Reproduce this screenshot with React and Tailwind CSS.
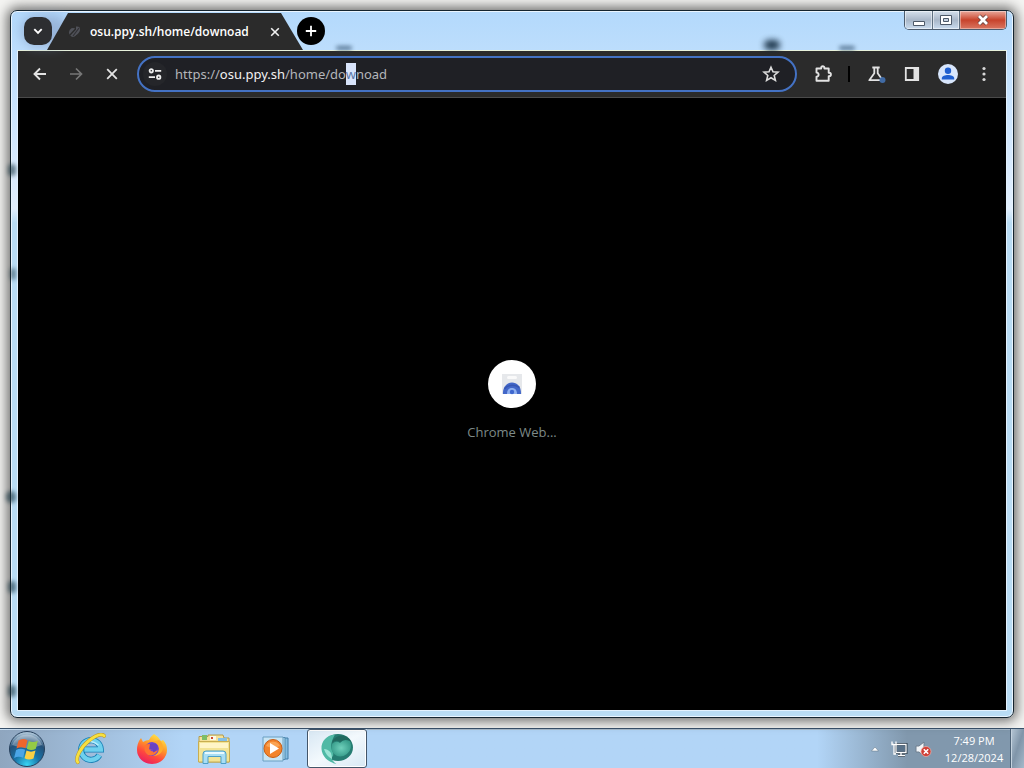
import React from "react";

const iconButton =
  "flex h-8 w-9 shrink-0 items-center justify-center text-[#e3e3e3] hover:text-white";

function Titlebar() {
  return (
    <header className="relative flex h-[39px] shrink-0 items-end pl-1.5">
      <span className="absolute right-[227px] bottom-0 h-2.5 w-4 rounded-full bg-[#10283c] opacity-90 blur-[3px]" />
      <span className="absolute right-[152px] bottom-0 h-1 w-4 rounded-full bg-[#2c4a66] opacity-70 blur-[2px]" />
      <span className="absolute left-[319px] bottom-0 h-1 w-4 rounded-full bg-[#2c4a66] opacity-70 blur-[2px]" />
      <span className="absolute left-1 top-1 h-8 w-12 rounded-full bg-[#7a90b8] opacity-50 blur-[6px]" />
      <button
        aria-label="Search tabs"
        className="relative mb-[5px] ml-px flex size-7 shrink-0 items-center justify-center rounded-[10px] bg-[#2d2e31]"
      >
        <svg viewBox="0 0 16 16" className="size-4" fill="none" stroke="#fff" strokeWidth="1.9">
          <path d="M4.3 6.2 8 9.9l3.7-3.7" />
        </svg>
      </button>
      <div className="relative -ml-[5px] flex h-[37px] w-[256px] shrink-0 items-center bg-[#2b2b2b] pr-5 pl-5 [clip-path:polygon(21px_0,234px_0,100%_100%,0_100%)]">
        <svg viewBox="0 0 16 16" className="size-4 shrink-0" fill="none">
          <ellipse cx="6" cy="8.500" rx="4" ry="4.400" fill="#505259" />
          <path d="M2 12 10.500 3" stroke="#2b2b2b" strokeWidth="1.4" />
          <path d="M9 2.500c3-.5 4.500 1 4 3.500s-2 4-4 5z" fill="#505259" />
          <path d="m6 12 6-8" stroke="#303135" strokeWidth="1.2" />
        </svg>
        <span className="ml-[7px] flex-1 truncate font-['Open_Sans','Noto_Sans',sans-serif] text-[12px] leading-4 font-semibold text-white">
          osu.ppy.sh/home/downoad
        </span>
        <button aria-label="Close tab" className="flex size-4 items-center justify-center">
          <svg viewBox="0 0 16 16" className="size-4" stroke="#f1f1f1" strokeWidth="1.6">
            <path d="m4.2 4.2 7.6 7.6M11.8 4.2l-7.6 7.6" />
          </svg>
        </button>
      </div>
      <button
        aria-label="New tab"
        className="relative mb-[5px] -ml-1.5 flex size-7 shrink-0 items-center justify-center rounded-full bg-black"
      >
        <svg viewBox="0 0 16 16" className="size-4" stroke="#fff" strokeWidth="1.8">
          <path d="M8 2.8v10.4M2.8 8h10.4" />
        </svg>
      </button>
      <div className="ml-auto flex h-[19px] self-start overflow-hidden rounded-b-[5px] border border-t-0 border-[#4b5b6d]">
        <button aria-label="Minimize" className="flex w-7 items-end justify-center border-r border-[#5f7080] bg-linear-to-b from-[#d5e0ec] via-[#a9b7c8] via-50% to-[#c9dbee] pb-0.5 shadow-[inset_0_0_0_1px_#ffffff80]">
          <svg viewBox="0 0 14 12" className="h-3 w-3.5"><path d="M1.5 6.5h11v4h-11z" fill="#fff" stroke="#4d5968" /></svg>
        </button>
        <button aria-label="Restore" className="flex w-[27px] items-center justify-center border-r border-[#5f7080] bg-linear-to-b from-[#d5e0ec] via-[#a9b7c8] via-50% to-[#c9dbee] shadow-[inset_0_0_0_1px_#ffffff80]">
          <svg viewBox="0 0 12 12" className="size-3"><path d="M.5 1.5h11v9H.5z" fill="#fff" stroke="#4d5968" /><path d="M3.5 4.5h5v3h-5z" fill="#c6d2e0" stroke="#4d5968" /></svg>
        </button>
        <button aria-label="Close" className="flex w-[46px] items-center justify-center bg-linear-to-b from-[#e7a79b] via-[#c7422b] via-50% to-[#d97560] shadow-[inset_0_0_0_1px_#ffffff60]">
          <svg viewBox="0 0 14 12" className="h-3 w-3.5" fill="none">
            <path d="m3 2 8 8M11 2l-8 8" stroke="#64413f" strokeWidth="4.4" />
            <path d="m3 2 8 8M11 2l-8 8" stroke="#fff" strokeWidth="2.800" />
          </svg>
        </button>
      </div>
    </header>
  );
}

function Toolbar() {
  return (
    <nav className="flex h-[47px] shrink-0 items-center border-b border-[#4a4a4a] bg-[#2b2b2b] pr-1 pl-1">
      <button aria-label="Back" className={iconButton}>
        <svg viewBox="0 0 20 20" className="size-5" fill="none" stroke="currentColor" strokeWidth="1.9"><path d="M16 10H5M10 4.5 4.5 10l5.5 5.5" /></svg>
      </button>
      <button aria-label="Forward" className={iconButton}>
        <svg viewBox="0 0 20 20" className="size-5" fill="none" stroke="#777" strokeWidth="1.7"><path d="M4 10h11M10 4.5l5.5 5.5-5.5 5.5" /></svg>
      </button>
      <button aria-label="Stop" className={iconButton}>
        <svg viewBox="0 0 20 20" className="size-5" fill="none" stroke="currentColor" strokeWidth="1.8"><path d="m5.2 5.2 9.6 9.6M14.8 5.2l-9.6 9.6" /></svg>
      </button>
      <div className="ml-[7px] flex h-9 min-w-0 flex-1 items-center rounded-full border-2 border-[#4472c4] bg-[#1f2025] pr-2.5 pl-1">
        <button aria-label="Site information" className="flex size-6 shrink-0 items-center justify-center rounded-full bg-[#25262a]">
          <svg viewBox="0 0 16 16" className="size-4" fill="none" stroke="#eee" strokeWidth="1.8">
            <circle cx="4.3" cy="4.8" r="1.7" /><path d="M8 4.8h6.2M1.8 11.2H8" /><circle cx="11.7" cy="11.2" r="1.7" />
          </svg>
        </button>
        <div className="relative ml-2 min-w-0 flex-1 text-[13px] leading-[22px]">
          <input
            aria-label="Address and search bar"
            defaultValue="https://osu.ppy.sh/home/downoad"
            spellCheck={false}
            className="block w-full bg-transparent text-transparent outline-none"
          />
          <span aria-hidden="true" className="pointer-events-none absolute inset-0 truncate text-[#b4b6ba]">
            https://<span className="text-[#f2f2f2]">osu.ppy.sh</span>/home/do<span className="bg-[#d8e4fb] py-0.5 text-[#5c78a8]">w</span>noad
          </span>
        </div>
        <button aria-label="Bookmark this tab" className="flex size-7 shrink-0 items-center justify-center">
          <svg viewBox="0 0 20 20" className="size-5" fill="none" stroke="#ddd" strokeWidth="1.6"><path d="m10 3.2 2 4.6 5 .4-3.8 3.3 1.2 4.9-4.4-2.6-4.4 2.6 1.2-4.9L3 8.200l5-.4z" /></svg>
        </button>
      </div>
      <button aria-label="Extensions" className={iconButton + " ml-2"}>
        <svg viewBox="0 0 20 20" className="size-5" fill="none" stroke="currentColor" strokeWidth="1.9" strokeLinejoin="round">
          <path d="M3.500 4.500h4.700V3.800a1.600 1.600 0 0 1 3.200 0v.7h4.300v4.200h.5a1.700 1.700 0 0 1 0 3.400h-.5v4.700H3.500v-4a2.100 2.100 0 0 0 0-4.200z" />
        </svg>
      </button>
      <span className="mr-2 ml-[7px] h-4 w-0.5 bg-black" />
      <button aria-label="Experiments" className={iconButton}>
        <svg viewBox="0 0 20 20" className="size-5" fill="none">
          <path d="M6.300 3.500h7.400M8.300 3.500v5.700l-5 7h13.400l-5-7V3.500" stroke="#e3e3e3" strokeWidth="1.8" strokeLinejoin="round" />
          <circle cx="16.500" cy="16" r="3" fill="#416ba5" />
        </svg>
      </button>
      <button aria-label="Side panel" className={iconButton}>
        <svg viewBox="0 0 20 20" className="size-5"><path d="M3.800 4h12.400v12H3.800z" fill="none" stroke="#e3e3e3" strokeWidth="1.800" /><path d="M11.500 4h5v12h-5z" fill="#e3e3e3" /></svg>
      </button>
      <button aria-label="Profile" className={iconButton}>
        <svg viewBox="0 0 20 20" className="size-5">
          <circle cx="10" cy="10" r="10" fill="#d8e6fc" />
          <circle cx="10" cy="6.800" r="3.200" fill="#1f5fd0" />
          <path d="M3.800 15.500v-1.400c0-2.100 3.500-3.200 6.200-3.200s6.200 1.100 6.200 3.200v1.400z" fill="#1f5fd0" />
        </svg>
      </button>
      <button aria-label="Menu" className={iconButton}>
        <svg viewBox="0 0 20 20" className="size-5" fill="#d8d8d8"><circle cx="10" cy="4.500" r="1.600" /><circle cx="10" cy="10" r="1.600" /><circle cx="10" cy="15.500" r="1.600" /></svg>
      </button>
    </nav>
  );
}

function Page() {
  return (
    <main className="flex flex-1 flex-col items-center justify-center bg-black pb-2">
      <a href="#webstore" className="flex flex-col items-center gap-4 font-['Open_Sans','Noto_Sans',sans-serif] text-[13px] leading-4 text-[#7d8a88]">
        <span className="flex size-12 items-center justify-center rounded-full bg-white">
          <svg viewBox="0 0 24 24" className="size-6">
            <path d="M2 2h20v20H2z" fill="#e6e8eb" />
            <rect x="7" y="4" width="10" height="3" rx="1.500" fill="#fafafa" />
            <path d="M3 22c-.5-7 4-11.500 9-11.500S21.500 15 21 22z" fill="#4267c8" />
            <path d="M7 22c0-4 2-6 5-6s5 2 5 6z" fill="#8fb0f0" />
            <circle cx="12" cy="20" r="2.200" fill="#3f68cf" />
            <path d="M4.500 17c3-4 9-5 15-1.500" stroke="#3656b3" strokeWidth="1.500" fill="none" />
          </svg>
        </span>
        <span>Chrome Web...</span>
      </a>
    </main>
  );
}

function StartOrb() {
  return (
    <svg viewBox="0 0 38 38" className="size-[38px]">
      <defs>
        <radialGradient id="orb" cx=".5" cy=".95" r=".9">
          <stop offset="0" stopColor="#37d5f4" /><stop offset=".4" stopColor="#1974a8" /><stop offset=".75" stopColor="#245078" /><stop offset="1" stopColor="#a9c2d6" />
        </radialGradient>
      </defs>
      <circle cx="19" cy="19" r="17.500" fill="url(#orb)" stroke="#27405c" />
      <path d="M4 15A16 16 0 0 1 34 15Q19 21 4 15" fill="#fff" opacity=".3" />
      <path d="M10.500 10.500q4.500-3 9-.2l-2 8q-4.500-2.300-9 .3z" fill="#f0662c" />
      <path d="M20.800 11q4.500 2.300 9-.3l-2 8q-4.500 2.500-9 0z" fill="#94ca45" />
      <path d="M8.100 20q4.500-2.500 9-.2l-2 8q-4.500-2.300-9 .2z" fill="#4ba5e6" />
      <path d="M18.500 20.500q4.500 2.300 9 0l-2 8q-4.500 2.300-9-.2z" fill="#fbd044" />
    </svg>
  );
}

function IeIcon() {
  return (
    <svg viewBox="0 0 34 34" className="size-8" fill="none">
      <path d="M27 23.500A10.500 10.500 0 1 1 28.500 17.500H11" stroke="#167fb5" strokeWidth="6.500" />
      <path d="M27 23.500A10.500 10.500 0 1 1 28.500 17.500H11" stroke="#6ed0ee" strokeWidth="4.800" />
      <path d="M9 13q8-8 17 0" stroke="#b4edfc" strokeWidth="1.500" />
      <path d="M4 31C1 27 7 15 16 8S30 1 32 3" stroke="#b9952b" strokeWidth="4" strokeLinecap="round" />
      <path d="M4 31C1 27 7 15 16 8S30 1 32 3" stroke="#f7e040" strokeWidth="3" strokeLinecap="round" />
    </svg>
  );
}

function FirefoxIcon() {
  return (
    <svg viewBox="0 0 34 34" className="size-[34px]">
      <defs>
        <linearGradient id="fox" x1=".8" y1="0" x2=".3" y2="1">
          <stop offset="0" stopColor="#fff14f" /><stop offset=".4" stopColor="#ff9b28" /><stop offset=".7" stopColor="#ff493d" /><stop offset="1" stopColor="#e91d62" />
        </linearGradient>
      </defs>
      <path d="M19 2q5 3 7 7l2-1q4 4 4 10a15 14 0 0 1-30 0q0-7 4-12l2 4q3-2 6-2 2-4 5-6" fill="url(#fox)" />
      <circle cx="17" cy="17" r="7" fill="#7147d5" />
      <path d="M10 13q7-3 10 3-3-1-5 2 3 3 8 0-3 7-10 5-5-3-3-10" fill="#ff7430" />
      <path d="M16 10q7-1 8 6 0 6-6 8 8 0 10-7 0-7-4-9-3 1-8 2" fill="#ffab2b" />
      <path d="M15 12q6-2 7.500 2.500 0 4-4.500 6 1-5-4-3z" fill="#6a42c0" />
    </svg>
  );
}

function ExplorerIcon() {
  return (
    <svg viewBox="0 0 36 32" className="h-8 w-9">
      <path d="M3 8V3.500h9V2h15l1 3h5v24H3z" fill="#f4e199" stroke="#b29b4c" />
      <path d="M6 2h5v5H6z" fill="#7dbd68" /><path d="M14 3h6v4h-6z" fill="#faf8e9" /><path d="M15 4h2v2h-2z" fill="#d04a31" /><path d="M22 5h9v3h-9z" fill="#84bfe6" />
      <path d="M2.500 8.500h31V29h-31z" fill="#f3e495" stroke="#c8ad50" />
      <path d="M4 10h28v5H4z" fill="#fff5c7" />
      <path d="M7 30.500V21q0-3 3-3h17q3 0 3 3v9.500h-5v-7H12v7z" fill="#a9def4" stroke="#4c9fc8" />
      <path d="M9 20h19" stroke="#e9faff" strokeWidth="2" />
    </svg>
  );
}

function MediaIcon() {
  return (
    <svg viewBox="0 0 30 28" className="h-7 w-[30px]">
      <path d="M8 3h19v21H8z" fill="#84bce1" stroke="#427ea8" /><path d="M5 2.500h19v22H5z" fill="#b1dbf2" stroke="#508bb1" /><path d="M2 2h20v24H2z" fill="#c7e5f5" stroke="#6b9fc1" />
      <circle cx="12" cy="13.500" r="9" fill="#f3842c" stroke="#c85d13" />
      <path d="M5 11a8 8 0 0 1 14 0q-7 3-14 0" fill="#ffc077" opacity=".55" />
      <path d="m9 8 9 5.500L9 19z" fill="#fff" />
    </svg>
  );
}

function OrbIcon() {
  return (
    <svg viewBox="0 0 36 34" className="h-[34px] w-9">
      <defs><radialGradient id="teal"><stop offset="0" stopColor="#6fd0bb" /><stop offset="1" stopColor="#3a9f8d" /></radialGradient></defs>
      <ellipse cx="19" cy="15.500" rx="15" ry="13.500" fill="#267d72" />
      <path d="M16 2.500C8 3 2 9 2.500 17c.5 7 6 13 15 15-4-3-5-5-4.500-7 3-2 0-6-1-10 0-5 2-9 4-12.500" fill="#4fb9a5" />
      <path d="M13 12q4-4 8-1 5-6 10-2 3 8-3 13-7 5-13 0-4-4-2-10" fill="url(#teal)" />
      <path d="M14 8q5-6 12-4 5 2 6 6-5-4-11 0-4-3-8 1z" fill="#20695f" />
      <path d="M5 17q4 0 7 4 1 3 1 6-6-3-8-10" fill="#9be4d5" />
    </svg>
  );
}

const apps = [
  ["Internet Explorer", IeIcon],
  ["Firefox", FirefoxIcon],
  ["Windows Explorer", ExplorerIcon],
  ["Windows Media Player", MediaIcon],
];

function Taskbar() {
  return (
    <footer className="flex h-10 shrink-0 items-stretch border-t border-[#39526c] bg-linear-to-r from-[#8fa6bf] via-[#b2d5f7] via-18% to-[#b2d5f7] shadow-[inset_0_1px_0_#c9dff2]">
      <button aria-label="Start" className="flex w-[54px] shrink-0 items-center justify-center">
        <StartOrb />
      </button>
      <div className="ml-[5px] flex shrink-0">
        {apps.map(([name, Icon]) => (
          <button key={name} aria-label={name} className="flex w-[62px] items-center justify-center">
            <Icon />
          </button>
        ))}
        <button aria-label="Chromium" className="flex w-[60px] items-center justify-center rounded-[3px] border border-[#43566a] bg-linear-to-br from-[#d7e7f3] via-[#f3f9fd] to-[#d7e8f4] shadow-[inset_0_0_0_1px_#fff]">
          <OrbIcon />
        </button>
      </div>
      <div className="flex flex-1 items-center justify-end bg-linear-to-r from-transparent from-70% to-[#8198ad] to-84% shadow-[inset_0_1px_0_#a9bccd]">
        <button aria-label="Show hidden icons" className="flex size-6 items-center justify-center">
          <svg viewBox="0 0 10 8" className="h-2 w-2.5"><path d="m1.500 6 3.500-4 3.500 4z" fill="#fff" stroke="#5e7183" strokeWidth=".5" /></svg>
        </button>
        <button aria-label="Network" className="flex size-6 items-center justify-center">
          <svg viewBox="0 0 18 18" className="size-[18px]" fill="none">
            <path d="M6 4.500h10v8H6zM8 15.500h7M11 13v2" stroke="#2a3a49" strokeWidth="3" />
            <path d="M6 4.500h10v8H6zM8 15.500h7M11 13v2M2 1.500v3h4v-3M4 5v9h2" stroke="#fff" strokeWidth="1.300" />
            <path d="M7 5.500h8v6H7z" fill="#597188" />
          </svg>
        </button>
        <button aria-label="Volume muted" className="flex size-6 items-center justify-center">
          <svg viewBox="0 0 18 18" className="size-[18px]">
            <path d="M2 6h3l5-4v14l-5-4H2z" fill="#f1f4f7" stroke="#6f7f8e" />
            <circle cx="12" cy="11.500" r="5" fill="#cf3e35" stroke="#f0b3aa" strokeWidth=".7" />
            <path d="m9.800 9.300 4.400 4.400M14.200 9.300l-4.400 4.400" stroke="#fff" strokeWidth="1.600" />
          </svg>
        </button>
        <time dateTime="2024-12-28T19:49" className="mr-[5px] ml-2 w-[62px] text-center font-['Open_Sans','Noto_Sans',sans-serif] text-[11px] leading-[17px] whitespace-nowrap text-white">
          7:49 PM<br />12/28/2024
        </time>
      </div>
      <button aria-label="Show desktop" className="w-3.5 shrink-0 border-l border-[#4d6276] bg-linear-to-br from-[#b9cad8] via-[#8095a9] to-[#a5b9ca] shadow-[inset_1px_0_0_#c5d3df]" />
    </footer>
  );
}

export default function App() {
  return (
    <div className="flex h-screen flex-col overflow-hidden bg-[#f4f4f2] font-['Noto_Sans','Open_Sans',sans-serif]">
      <div className="relative flex flex-1 flex-col p-2.5">
        <section className="flex flex-1 flex-col rounded-[7px] border border-[#14242f] bg-linear-to-b from-[#b3d9fc] via-[#e2effd] via-28% to-[#b9dcf4] to-30% px-1.5 pb-1.5 shadow-[inset_0_0_0_1px_#eaf5ff,0_0_12px_3px_#00000090]">
          <Titlebar />
          <div className="flex flex-1 flex-col border border-t-[#e8f2dc] border-r-[#e3f1fd] border-b-[#e3f1fd] border-l-[#e3f1fd] bg-[#2b2b2b]">
            <Toolbar />
            <Page />
          </div>
        </section>
        <div aria-hidden="true">
          <span className="absolute top-[164px] left-2 h-3 w-2 rounded-full bg-[#12303d] opacity-60 blur-[2px]" />
          <span className="absolute top-[268px] left-2.5 h-3 w-1.5 rounded-full bg-[#12303d] opacity-50 blur-[2px]" />
          <span className="absolute top-[491px] left-1.5 h-3 w-2.5 rounded-full bg-[#12303d] opacity-60 blur-[2px]" />
          <span className="absolute top-[581px] left-2 h-3 w-2 rounded-full bg-[#12303d] opacity-60 blur-[2px]" />
          <span className="absolute top-[685px] left-2 h-3 w-2 rounded-full bg-[#12303d] opacity-60 blur-[2px]" />
        </div>
      </div>
      <Taskbar />
    </div>
  );
}
